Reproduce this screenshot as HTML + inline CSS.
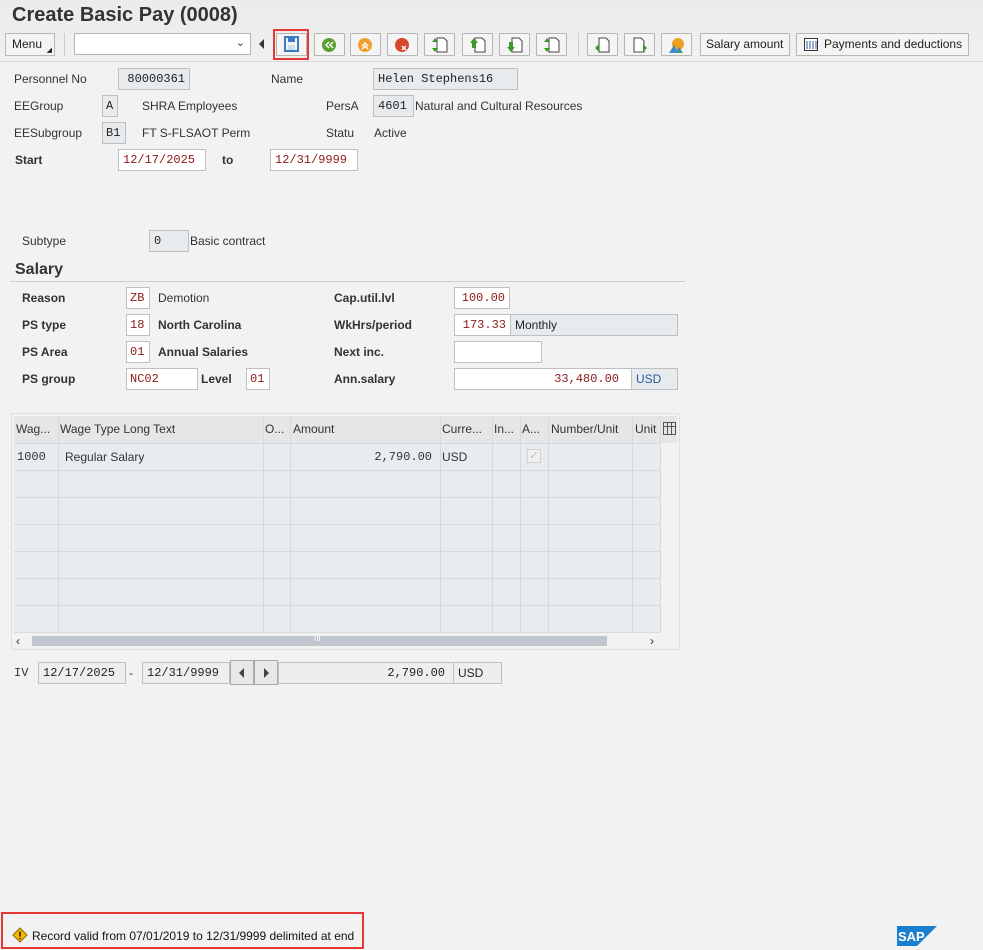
<!DOCTYPE html>
<html><head><meta charset="utf-8"><style>
*{box-sizing:border-box;margin:0;padding:0}
body{width:983px;height:950px;background:#f2f2f2;font-family:"Liberation Sans",Arial,sans-serif;font-size:12px;color:#333;position:relative;overflow:hidden}
.a{position:absolute;white-space:nowrap}
.t{position:absolute;white-space:nowrap;font-size:12px;color:#333;line-height:14px}
.b{font-weight:bold}
.f{position:absolute;height:22px;border:1px solid #bfbfbf;font-family:"Liberation Mono",monospace;font-size:12px;line-height:20px;padding:0 4px;white-space:nowrap}
.ro{background:#e8ebee;color:#222}
.in{background:#fff;color:#8b1a1a}
.btn{position:absolute;top:33px;height:23px;border:1px solid #b7b7b7;background:#f4f4f4;border-radius:1px}
.tb{position:absolute;top:33px;height:23px;border:1px solid #b7b7b7;background:#f4f4f4;font-size:12px;line-height:21px;padding:0 4px;color:#222;white-space:nowrap;overflow:hidden}
.col{position:absolute;top:416px;width:1px;height:216px;background:#d6dadf}
.row{position:absolute;left:14px;width:646px;height:1px;background:#d6dadf}
</style></head><body>
<div class="a" style="left:0;top:0;width:983px;height:62px;background:linear-gradient(#ebebeb,#f0f0f0)"></div>
<div class="a" style="left:12px;top:4px;font-size:20px;font-weight:bold;color:#333">Create Basic Pay (0008)</div>
<div class="a" style="left:0;top:61px;width:983px;height:1px;background:#d8d8d8"></div>
<div class="tb" style="left:5px;width:50px;padding-left:6px">Menu<span style="position:absolute;right:2px;bottom:0;font-size:7px;line-height:8px">◢</span></div>
<div class="a" style="left:64px;top:33px;width:1px;height:23px;background:#ccc"></div>
<div class="a" style="left:74px;top:33px;width:177px;height:22px;background:#fff;border:1px solid #b7b7b7"><span style="position:absolute;right:5px;top:2px;font-size:11px">⌄</span></div>
<div class="a" style="left:259px;top:39px;width:0;height:0;border-top:5px solid transparent;border-bottom:5px solid transparent;border-right:5px solid #333"></div>
<div class="a" style="left:273px;top:29px;width:36px;height:31px;border:2px solid #e53935"></div>
<div class="btn" style="left:276px;width:31px"><svg width="29" height="21"><rect x="8" y="3" width="13" height="14" fill="none" stroke="#3a7bc8" stroke-width="2"/><rect x="11" y="4" width="7" height="4" fill="#3a7bc8"/><rect x="11" y="11" width="7" height="5" fill="#cde"/></svg></div>
<div class="btn" style="left:314px;width:31px"><svg width="29" height="21"><circle cx="14" cy="11" r="7" fill="#5aa02c"/><path d="M14 8l-3 3 3 3M18 8l-3 3 3 3" stroke="#fff" fill="none" stroke-width="1.5"/></svg></div>
<div class="btn" style="left:350px;width:31px"><svg width="29" height="21"><circle cx="14" cy="11" r="7" fill="#f0a030"/><path d="M11 12l3-3 3 3M11 15l3-3 3 3" stroke="#fff" fill="none" stroke-width="1.5"/></svg></div>
<div class="btn" style="left:387px;width:31px"><svg width="29" height="21"><circle cx="14" cy="11" r="7" fill="#d9472b"/><path d="M14 12l4 4M18 12l-4 4" stroke="#fff" stroke-width="1.5"/></svg></div>
<div class="btn" style="left:424px;width:31px"><svg width="29" height="21"><path d="M12 4h7l3 3v11h-10z" fill="#fff" stroke="#444"/><path d="M10 4l-3 4h6zM10 18l-3-4h6z" fill="#3a9a2a"/></svg></div>
<div class="btn" style="left:462px;width:31px"><svg width="29" height="21"><path d="M12 4h7l3 3v11h-10z" fill="#fff" stroke="#444"/><path d="M11 4l-4 5h8z" fill="#3a9a2a"/><rect x="9" y="9" width="4" height="5" fill="#3a9a2a"/></svg></div>
<div class="btn" style="left:499px;width:31px"><svg width="29" height="21"><path d="M12 4h7l3 3v11h-10z" fill="#fff" stroke="#444"/><path d="M11 18l-4-5h8z" fill="#3a9a2a"/><rect x="9" y="8" width="4" height="5" fill="#3a9a2a"/></svg></div>
<div class="btn" style="left:536px;width:31px"><svg width="29" height="21"><path d="M12 4h7l3 3v11h-10z" fill="#fff" stroke="#444"/><path d="M10 4l-3 4h6zM10 18l-3-4h6z" fill="#3a9a2a"/></svg></div>
<div class="a" style="left:578px;top:33px;width:1px;height:23px;background:#ccc"></div>
<div class="btn" style="left:587px;width:31px"><svg width="29" height="21"><path d="M11 4h7l3 3v11h-10z" fill="#fff" stroke="#444"/><path d="M7 14l4-4v8z" fill="#3a9a2a"/></svg></div>
<div class="btn" style="left:624px;width:31px"><svg width="29" height="21"><path d="M9 4h7l3 3v11h-10z" fill="#fff" stroke="#444"/><path d="M22 14l-4-4v8z" fill="#3a9a2a"/></svg></div>
<div class="btn" style="left:661px;width:31px"><svg width="29" height="21"><circle cx="16" cy="10" r="6" fill="#f0a020"/><path d="M7 19l5-8 4 8zM13 19l4-6 4 6z" fill="#3a8fd0"/><path d="M15 19l2-3 3 3z" fill="#4aa040"/></svg></div>
<div class="tb" style="left:700px;width:90px;padding-left:5px">Salary amount</div>
<div class="tb" style="left:796px;width:173px;padding-left:27px"><svg style="position:absolute;left:7px;top:4px" width="14" height="13"><rect x="0.5" y="0.5" width="13" height="12" fill="#fff" stroke="#333"/><path d="M3 3v8M6 3v8M9 3v8M12 3v8" stroke="#2a5a9a"/></svg>Payments and deductions</div>

<div class="t" style="left:14px;top:72px">Personnel No</div>
<div class="f ro" style="left:118px;top:68px;width:72px;text-align:right">80000361</div>
<div class="t" style="left:271px;top:72px">Name</div>
<div class="f ro" style="left:373px;top:68px;width:145px">Helen Stephens16</div>
<div class="t" style="left:14px;top:99px">EEGroup</div>
<div class="f ro" style="left:102px;top:95px;width:16px;padding:0 3px">A</div>
<div class="t" style="left:142px;top:99px">SHRA Employees</div>
<div class="t" style="left:326px;top:99px">PersA</div>
<div class="f ro" style="left:373px;top:95px;width:41px">4601</div>
<div class="t" style="left:415px;top:99px">Natural and Cultural Resources</div>
<div class="t" style="left:14px;top:126px">EESubgroup</div>
<div class="f ro" style="left:102px;top:122px;width:24px;padding:0 3px">B1</div>
<div class="t" style="left:142px;top:126px">FT S-FLSAOT Perm</div>
<div class="t" style="left:326px;top:126px">Statu</div>
<div class="t" style="left:374px;top:126px">Active</div>
<div class="t b" style="left:15px;top:153px">Start</div>
<div class="f in" style="left:118px;top:149px;width:88px">12/17/2025</div>
<div class="t b" style="left:222px;top:153px">to</div>
<div class="f in" style="left:270px;top:149px;width:88px">12/31/9999</div>

<div class="t" style="left:22px;top:234px">Subtype</div>
<div class="f ro" style="left:149px;top:230px;width:40px">0</div>
<div class="t" style="left:190px;top:234px">Basic contract</div>
<div class="a" style="left:15px;top:261px;font-size:16px;font-weight:bold;color:#333">Salary</div>
<div class="a" style="left:10px;top:281px;width:675px;height:1px;background:#ccc"></div>

<div class="t b" style="left:22px;top:291px">Reason</div>
<div class="f in" style="left:126px;top:287px;width:24px;padding:0 3px">ZB</div>
<div class="t" style="left:158px;top:291px">Demotion</div>
<div class="t b" style="left:22px;top:318px">PS type</div>
<div class="f in" style="left:126px;top:314px;width:24px;padding:0 3px">18</div>
<div class="t b" style="left:158px;top:318px">North Carolina</div>
<div class="t b" style="left:22px;top:345px">PS Area</div>
<div class="f in" style="left:126px;top:341px;width:24px;padding:0 3px">01</div>
<div class="t b" style="left:158px;top:345px">Annual Salaries</div>
<div class="t b" style="left:22px;top:372px">PS group</div>
<div class="f in" style="left:126px;top:368px;width:72px;padding:0 3px">NC02</div>
<div class="t b" style="left:201px;top:372px">Level</div>
<div class="f in" style="left:246px;top:368px;width:24px;padding:0 3px">01</div>

<div class="t b" style="left:334px;top:291px">Cap.util.lvl</div>
<div class="f in" style="left:454px;top:287px;width:56px;text-align:right">100.00</div>
<div class="t b" style="left:334px;top:318px">WkHrs/period</div>
<div class="f in" style="left:454px;top:314px;width:57px;text-align:right">173.33</div>
<div class="f ro" style="left:510px;top:314px;width:168px;font-family:'Liberation Sans',sans-serif;color:#222">Monthly</div>
<div class="t b" style="left:334px;top:345px">Next inc.</div>
<div class="f in" style="left:454px;top:341px;width:88px"></div>
<div class="t b" style="left:334px;top:372px">Ann.salary</div>
<div class="f in" style="left:454px;top:368px;width:178px;text-align:right;padding-right:12px">33,480.00</div>
<div class="f ro" style="left:631px;top:368px;width:47px;font-family:'Liberation Sans',sans-serif;color:#1d5b9a">USD</div>

<div class="a" style="left:11px;top:413px;width:669px;height:237px;border:1px solid #e0e0e0;background:#f2f2f2"></div>
<div class="a" style="left:14px;top:416px;width:663px;height:27px;background:#e4e6e8"></div>
<div class="a" style="left:14px;top:443px;width:646px;height:189px;background:#e9ecef"></div>
<div class="a" style="left:660px;top:443px;width:17px;height:189px;background:#f2f2f2"></div>
<div class="col" style="left:58px"></div><div class="col" style="left:263px"></div><div class="col" style="left:290px"></div><div class="col" style="left:440px"></div><div class="col" style="left:492px"></div><div class="col" style="left:520px"></div><div class="col" style="left:548px"></div><div class="col" style="left:632px"></div><div class="col" style="left:660px"></div>
<div class="row" style="top:443px"></div><div class="row" style="top:470px"></div><div class="row" style="top:497px"></div><div class="row" style="top:524px"></div><div class="row" style="top:551px"></div><div class="row" style="top:578px"></div><div class="row" style="top:605px"></div><div class="row" style="top:632px"></div>
<div class="t" style="left:16px;top:422px">Wag...</div>
<div class="t" style="left:60px;top:422px">Wage Type Long Text</div>
<div class="t" style="left:265px;top:422px">O...</div>
<div class="t" style="left:293px;top:422px">Amount</div>
<div class="t" style="left:442px;top:422px">Curre...</div>
<div class="t" style="left:494px;top:422px">In...</div>
<div class="t" style="left:522px;top:422px">A...</div>
<div class="t" style="left:551px;top:422px">Number/Unit</div>
<div class="t" style="left:635px;top:422px">Unit</div>
<svg class="a" style="left:663px;top:422px" width="13" height="13"><rect x="0.5" y="0.5" width="12" height="12" fill="none" stroke="#555"/><path d="M0 4.5h13M4.5 0v13M8.5 0v13" stroke="#555"/></svg>
<div class="a" style="left:17px;top:450px;font-family:'Liberation Mono',monospace;font-size:12px">1000</div>
<div class="t" style="left:65px;top:450px">Regular Salary</div>
<div class="a" style="left:300px;top:450px;width:132px;text-align:right;font-family:'Liberation Mono',monospace;font-size:12px">2,790.00</div>
<div class="t" style="left:442px;top:450px">USD</div>
<div class="a" style="left:527px;top:449px;width:14px;height:14px;border:1px solid #d0d0d0;background:#eef0f2;color:#bbb;font-size:11px;line-height:12px;text-align:center">✓</div>
<div class="a" style="left:16px;top:634px;font-size:12px;color:#333">‹</div>
<div class="a" style="left:32px;top:636px;width:575px;height:10px;background:#bfc6ce"></div>
<div class="a" style="left:314px;top:634px;font-size:8px;color:#fff">III</div>
<div class="a" style="left:650px;top:634px;font-size:12px;color:#333">›</div>

<div class="a" style="left:14px;top:666px;font-family:'Liberation Mono',monospace;font-size:12px">IV</div>
<div class="f ro" style="left:38px;top:662px;width:88px;background:#eceef0">12/17/2025</div>
<div class="t" style="left:129px;top:666px">-</div>
<div class="f ro" style="left:142px;top:662px;width:88px;background:#eceef0">12/31/9999</div>
<div class="a" style="left:230px;top:660px;width:24px;height:25px;border:1px solid #aaa;background:#e8e8e8"><div style="position:absolute;left:8px;top:7px;border-top:5px solid transparent;border-bottom:5px solid transparent;border-right:5px solid #444"></div></div>
<div class="a" style="left:254px;top:660px;width:24px;height:25px;border:1px solid #aaa;background:#e8e8e8"><div style="position:absolute;left:9px;top:7px;border-top:5px solid transparent;border-bottom:5px solid transparent;border-left:5px solid #444"></div></div>
<div class="f ro" style="left:278px;top:662px;width:176px;text-align:right;padding-right:8px;background:#eceef0">2,790.00</div>
<div class="f ro" style="left:453px;top:662px;width:49px;font-family:'Liberation Sans',sans-serif;background:#eceef0">USD</div>

<div class="a" style="left:1px;top:912px;width:363px;height:37px;border:2px solid #e53935"></div>
<svg class="a" style="left:12px;top:927px" width="16" height="16"><path d="M8 1l7 7-7 7-7-7z" fill="#f5b800" stroke="#8a6a00"/><path d="M8 4.5v5" stroke="#222" stroke-width="1.6"/><circle cx="8" cy="11.5" r="0.9" fill="#222"/></svg>
<div class="t" style="left:32px;top:929px;color:#111">Record valid from 07/01/2019 to 12/31/9999 delimited at end</div>
<svg class="a" style="left:897px;top:926px" width="40" height="20"><path d="M0 0h40l-20 20h-20z" fill="#1b7fd0"/><text x="1" y="15" font-family="Liberation Sans" font-weight="bold" font-size="13" fill="#fff">SAP</text></svg>
</body></html>
